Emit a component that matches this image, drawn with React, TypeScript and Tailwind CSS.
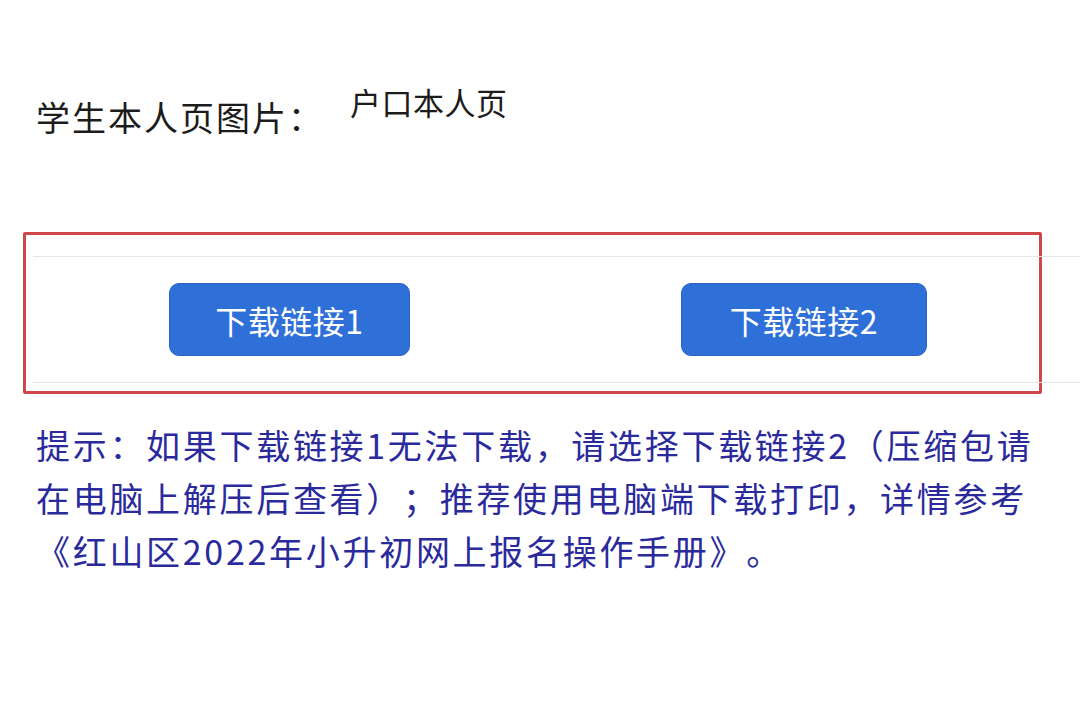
import React from "react";

const cjk = { fontFamily: '"Noto Sans CJK SC", "Noto Sans", sans-serif' };

// one of the two blue download buttons
function DownloadButton({ label, className }: { label: string; className?: string }) {
  return (
    <button
      type="button"
      className={`flex h-[73px] items-center justify-center rounded-[10px] border border-[#2a63c4] bg-[#2f70d8] text-[32px] leading-none tracking-[0.5px] text-white ${className ?? ""}`}
    >
      {label}
    </button>
  );
}

export default function App() {
  return (
    <div
      className="min-h-[712px] w-[1080px] overflow-hidden bg-white [text-spacing-trim:space-all]"
      style={cjk}
    >
      {/* Header: label + value */}
      <div className="flex h-[232px] items-start pl-[36px] pt-[86px]">
        <span className="mt-[13px] text-[34px] leading-[36px] tracking-[2px] text-[#1c1c1c]">
          学生本人页图片：
        </span>
        <span className="ml-[26px] text-[31px] leading-[32px] tracking-[0.5px] text-[#1c1c1c]">
          户口本人页
        </span>
      </div>

      {/* Red annotation box around the download row */}
      <div className="ml-[23px] h-[162px] w-[1019px] rounded-[2px] border-[3px] border-[#cf464b] pt-[21px]">
        <div className="ml-[7px] mr-[-42px] flex h-[127px] items-center border-y border-[#e6e6e6] pl-[136px]">
          <DownloadButton label="下载链接1" className="w-[241px]" />
          <DownloadButton label="下载链接2" className="ml-[271px] w-[246px]" />
        </div>
      </div>

      {/* Hint text */}
      <p className="mt-[24px] pl-[36px] pr-[16px] text-[34px] leading-[53px] tracking-[2.7px] text-[#2a2a9c]">
        提示：如果下载链接1无法下载，请选择下载链接2（压缩包请在电脑上解压后查看）；推荐使用电脑端下载打印，详情参考《红山区2022年小升初网上报名操作手册》。
      </p>
    </div>
  );
}
